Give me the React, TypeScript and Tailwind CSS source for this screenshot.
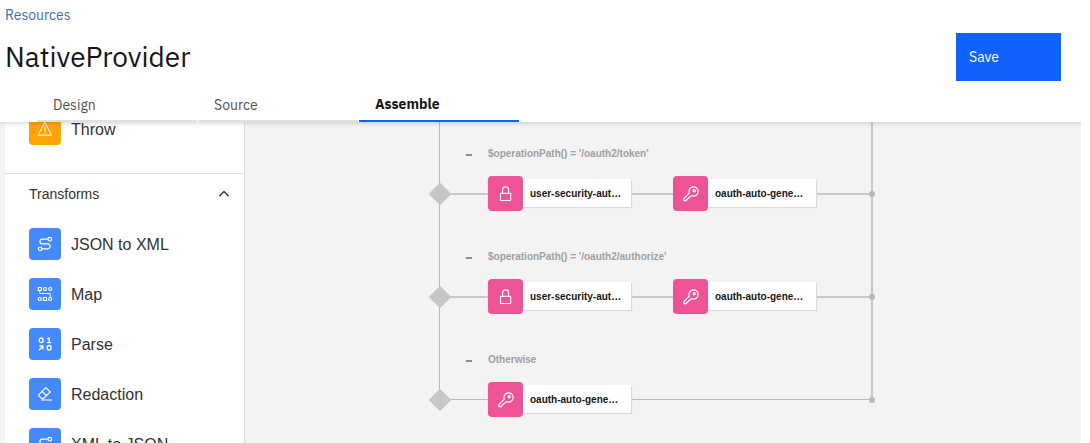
import type { ReactNode } from "react";

const iconProps = {
  viewBox: "0 0 16 16",
  width: 16,
  height: 16,
  fill: "none",
  stroke: "currentColor",
  strokeLinecap: "round" as const,
  strokeLinejoin: "round" as const,
  "aria-hidden": true,
};

const WarningIcon = () => (
  <svg {...iconProps} strokeWidth="1">
    <path d="M8 1.8 14.6 14.2H1.4Z" />
    <path d="M8 6.3v4M8 11.8v.6" />
  </svg>
);

const ConvertIcon = () => (
  <svg {...iconProps} strokeWidth="1.2">
    <circle cx="12.8" cy="3.2" r="1.8" />
    <circle cx="3.2" cy="12.8" r="1.8" />
    <path d="M11 3.2H5.2a2.3 2.3 0 0 0 0 4.6h5.4a2.4 2.4 0 0 1 0 5H5" />
  </svg>
);

const MapIcon = () => (
  <svg {...iconProps} strokeWidth="1.2">
    <rect x="1.3" y="1.5" width="3" height="3" />
    <circle cx="8" cy="3" r="1.5" />
    <circle cx="13.2" cy="3" r="1.5" />
    <circle cx="2.8" cy="13" r="1.5" />
    <rect x="6.5" y="11.5" width="3" height="3" />
    <circle cx="13.2" cy="13" r="1.5" />
    <path d="M2.8 4.8V7.5h10.4v3.9" strokeWidth="0.9" />
  </svg>
);

const ParseIcon = () => (
  <svg {...iconProps} strokeWidth="1.3">
    <ellipse cx="4.2" cy="4.3" rx="2" ry="2.3" />
    <path d="M10.6 2.8 12.1 2v4.6M10.4 6.6h3.4" />
    <path d="M2.4 13.8 5.8 10.2M3 10h3v3" />
    <ellipse cx="12.1" cy="11.8" rx="2" ry="2.3" />
  </svg>
);

const EraserIcon = () => (
  <svg {...iconProps} strokeWidth="1.2">
    <path d="M1.8 8.6 8.8 1.6 13.2 6 6.6 12.4H4.6L1.8 9.8ZM5 5.4l4.6 4.4" />
    <path d="M4 14H15" strokeWidth="1.8" strokeLinecap="butt" opacity=".6" />
  </svg>
);

const LockIcon = () => (
  <svg {...iconProps} strokeWidth="1.1">
    <rect x="2.5" y="7.2" width="10.2" height="7.3" rx=".6" />
    <path d="M4.6 7.2V3.7a3 2.8 0 0 1 6 0v3.5" />
  </svg>
);

const KeyIcon = () => (
  <svg {...iconProps} strokeWidth="1.2">
    <path d="M6.3 7.2A4.6 4.6 0 1 1 9 9.8L7.9 9.9 7.2 11 6 11.3 5.5 12.5 4.4 12.8 3.2 14.6H.9V12.6Z" />
    <circle cx="11.2" cy="4.8" r="1.1" />
  </svg>
);

const ChevronUp = () => (
  <svg {...iconProps} strokeWidth="1.3" strokeLinecap="butt" strokeLinejoin="miter">
    <path d="M3.3 10.2 8 5.5l4.7 4.7" />
  </svg>
);

function PolicyItem({ icon, label, color = "bg-[#4589ff]" }: { icon: ReactNode; label: string; color?: string }) {
  return (
    <li className="flex h-8 items-center gap-2.5">
      <span className={`flex size-8 shrink-0 items-center justify-center rounded text-white ${color}`}>{icon}</span>
      <span className="pt-0.5 text-base text-[#323232]">{label}</span>
    </li>
  );
}

function PolicyNode({ icon, label }: { icon: ReactNode; label: string }) {
  return (
    <button type="button" className="flex w-36 shrink-0 items-center pr-px">
      <span className="flex size-[35px] shrink-0 items-center justify-center rounded bg-[#ee5396] text-white">
        {icon}
      </span>
      <span className="mb-px h-7 min-w-0 flex-1 bg-white pl-[7px] text-left text-[10px] leading-[30px] font-bold whitespace-nowrap text-[#161616] shadow-[1px_1px_1px_#dadada]">
        {label}
      </span>
    </button>
  );
}

type Step = { kind: "lock" | "key"; label: string };

function Branch({ condition, steps, last = false }: { condition: string; steps: Step[]; last?: boolean }) {
  const line = last ? "h-px bg-[#b8b8b8]" : "h-0.5 bg-[#c8c8c8]";
  return (
    <section className="relative flex h-[103px] flex-col justify-end">
      <header className="mb-3.5 flex h-4 items-center pl-[27px]">
        <button type="button" aria-label="Collapse branch" className="flex h-4 w-[22px] items-center pt-0.5">
          <span className="h-0.5 w-1.5 bg-[#8d8d8d]" />
        </button>
        <h3 className="text-[10px] leading-4 font-bold text-[#a0a0a0]">{condition}</h3>
      </header>
      <div className="flex h-[35px] items-center">
        <span className={`w-[49px] shrink-0 ${line}`} />
        {steps.map((step, i) => (
          <div key={i} className="flex items-center">
            {i > 0 && <span className={`w-[41px] shrink-0 ${line}`} />}
            <PolicyNode icon={step.kind === "lock" ? <LockIcon /> : <KeyIcon />} label={step.label} />
          </div>
        ))}
        <span className={`flex-1 ${line}`} />
      </div>
      <span className="absolute bottom-[9px] -left-[7px] size-4 rotate-45 bg-[#c6c6c6]" />
      <span className="absolute -right-0.5 bottom-3.5 size-1.5 rounded-full bg-[#b8b8b8]" />
    </section>
  );
}

function Tab({ label, active = false }: { label: string; active?: boolean }) {
  return (
    <button
      type="button"
      role="tab"
      aria-selected={active}
      className={`h-[34px] w-40 border-b-2 px-4 text-left text-sm ${
        active ? "border-[#0f62fe] font-bold text-[#161616]" : "border-[#e0e0e0] pt-0.5 text-[#525252]"
      }`}
    >
      {label}
    </button>
  );
}

export default function App() {
  return (
    <div className="flex h-screen flex-col overflow-hidden bg-white pr-[9px] font-['Liberation_Sans',Arial,sans-serif]">
      <header className="relative z-10 bg-white pt-1.5 font-['IBM_Plex_Sans','Open_Sans',sans-serif] shadow-[0_1px_5px_rgba(0,0,0,0.18)] [clip-path:inset(0_0_-8px_0)]">
        <a href="#resources" className="ml-[5px] block w-fit text-sm leading-[18px] text-[#3d70b2]">
          Resources
        </a>
        <div className="mt-[9px] flex h-12 items-center justify-between pr-5 pl-[5px]">
          <h1 className="text-[28px] leading-9 text-[#161616]">NativeProvider</h1>
          <button type="button" className="h-12 w-[105px] bg-[#0f62fe] px-[13px] text-left text-sm text-white">
            Save
          </button>
        </div>
        <div role="tablist" className="mt-[7px] flex gap-px pl-[37px]">
          <Tab label="Design" />
          <Tab label="Source" />
          <Tab label="Assemble" active />
        </div>
      </header>

      <main className="flex min-h-0 flex-1 bg-[#f3f3f3] pl-[5px]">
        <aside className="w-60 shrink-0 border-r border-[#e0e0e0] bg-white">
          <ul className="-mt-[9px] px-6 pb-7">
            <PolicyItem icon={<WarningIcon />} label="Throw" color="bg-[#ffa400]" />
          </ul>
          <section className="border-t border-[#e0e0e0]">
            <button type="button" className="flex h-10 w-full items-center justify-between pr-3 pl-6 text-sm text-[#323232]">
              Transforms
              <ChevronUp />
            </button>
            <ul className="mt-3.5 flex flex-col gap-[18px] px-6">
              <PolicyItem icon={<ConvertIcon />} label="JSON to XML" />
              <PolicyItem icon={<MapIcon />} label="Map" />
              <PolicyItem icon={<ParseIcon />} label="Parse" />
              <PolicyItem icon={<EraserIcon />} label="Redaction" />
              <PolicyItem icon={<ConvertIcon />} label="XML to JSON" />
            </ul>
          </section>
        </aside>

        <div className="min-w-0 flex-1 overflow-hidden pl-[194px]">
          <div className="relative -mt-3.5 w-[434px]">
            <span className="absolute top-0 bottom-[17px] left-0 w-px bg-[#b8b8b8]" />
            <span className="absolute top-0 right-0 bottom-[17px] w-0.5 bg-[#c8c8c8]" />
            <Branch
              condition="$operationPath() = '/oauth2/token'"
              steps={[
                { kind: "lock", label: "user-security-aut…" },
                { kind: "key", label: "oauth-auto-gene…" },
              ]}
            />
            <Branch
              condition="$operationPath() = '/oauth2/authorize'"
              steps={[
                { kind: "lock", label: "user-security-aut…" },
                { kind: "key", label: "oauth-auto-gene…" },
              ]}
            />
            <Branch condition="Otherwise" steps={[{ kind: "key", label: "oauth-auto-gene…" }]} last />
          </div>
        </div>
      </main>
    </div>
  );
}
